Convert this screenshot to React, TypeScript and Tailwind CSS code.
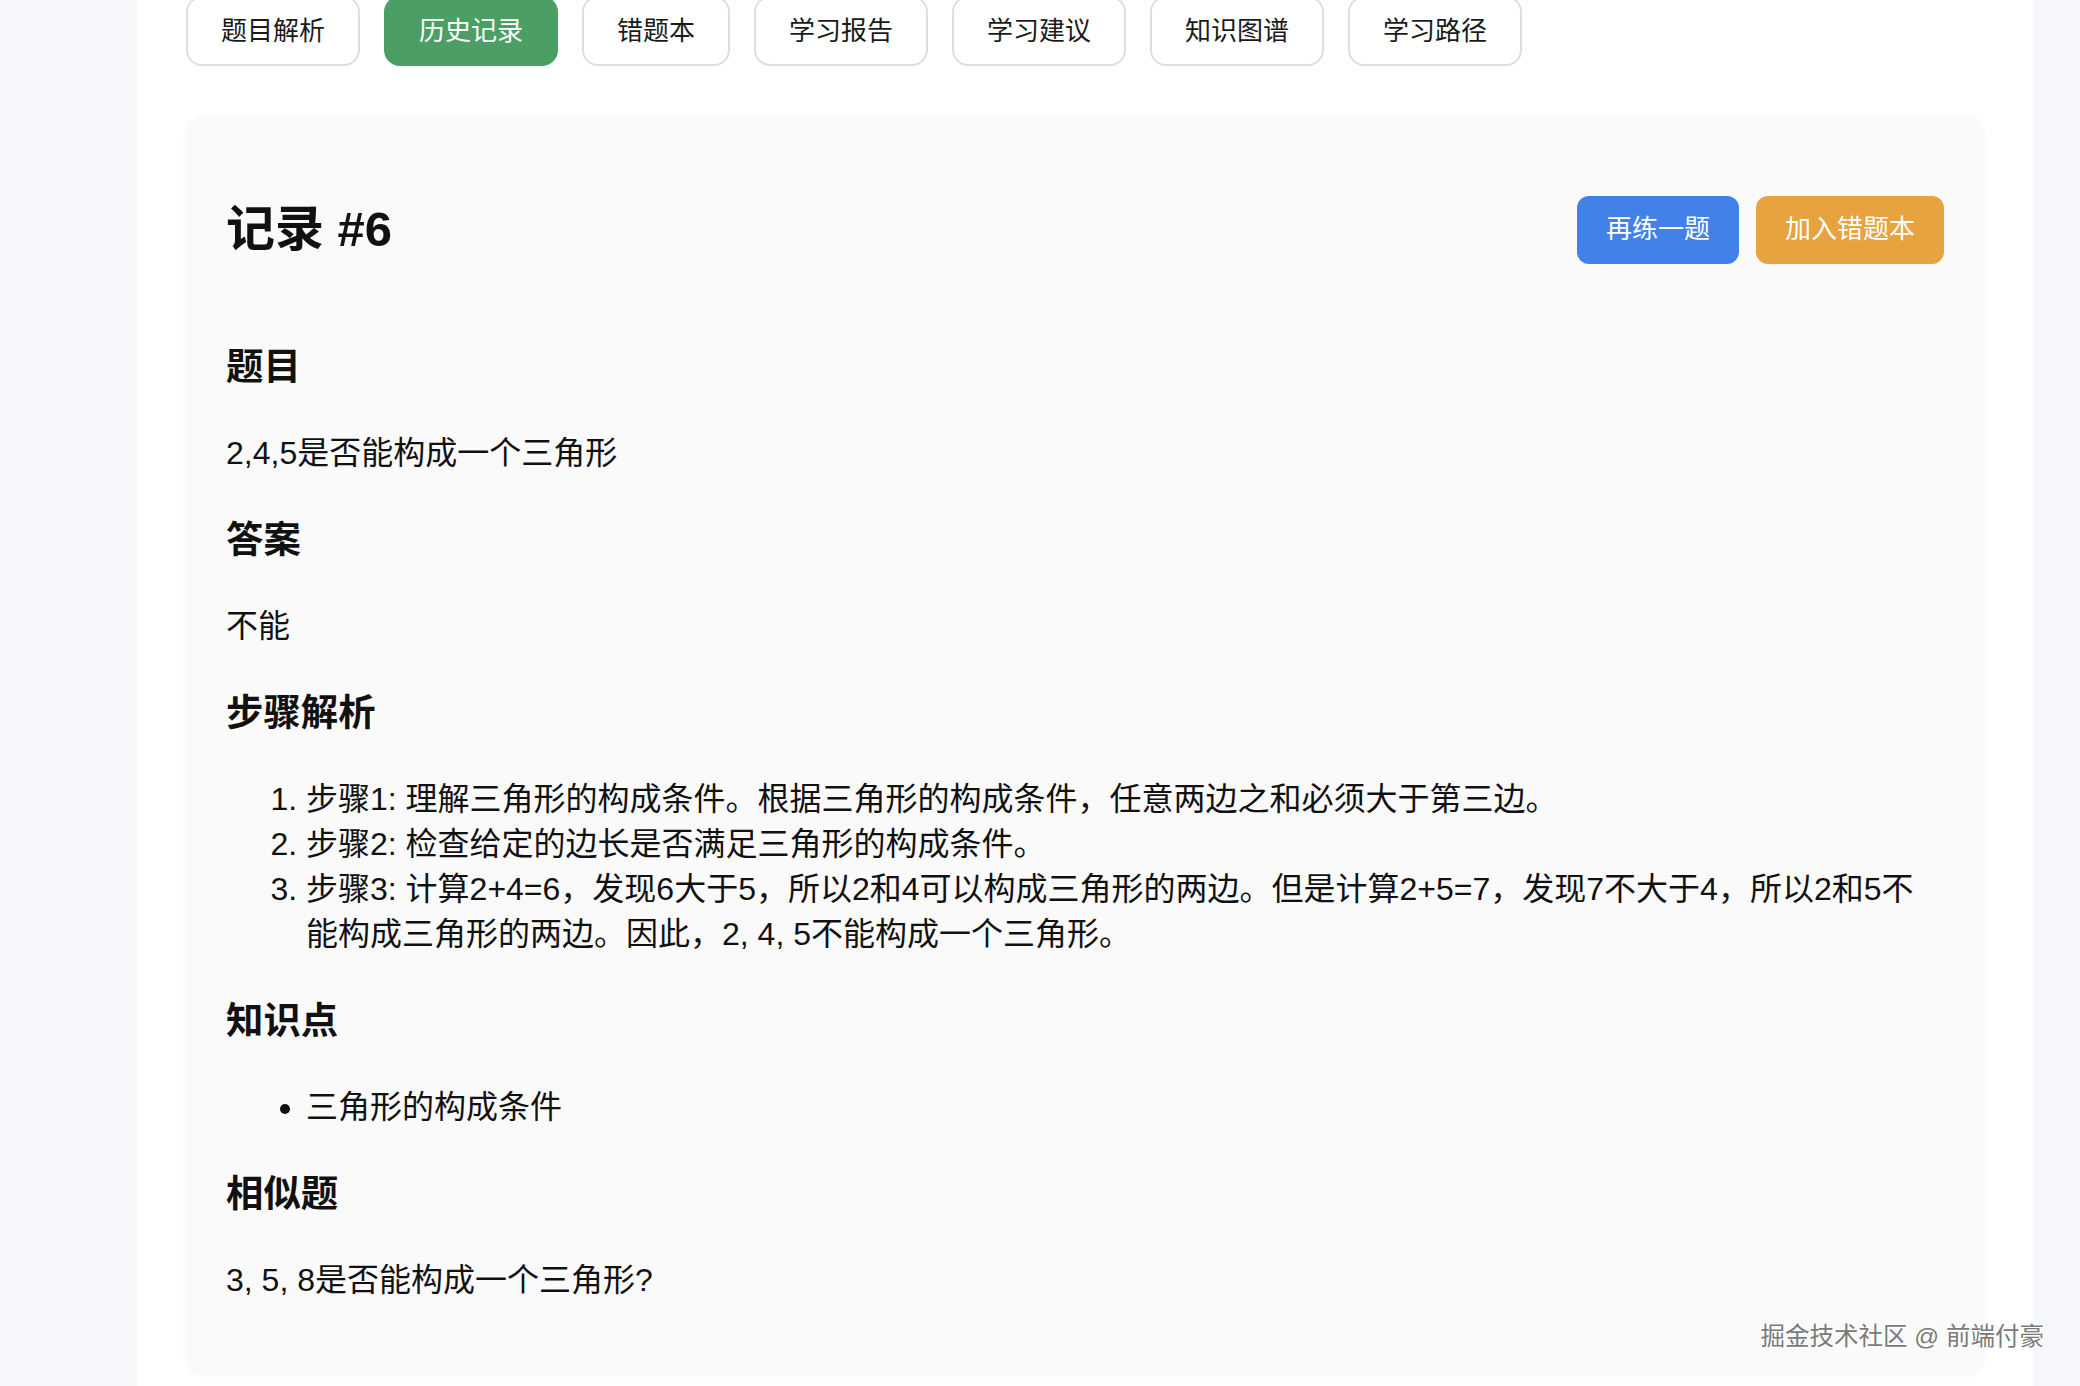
const tabs = ["题目解析", "历史记录", "错题本", "学习报告", "学习建议", "知识图谱", "学习路径"];

const steps = [
  "步骤1: 理解三角形的构成条件。根据三角形的构成条件，任意两边之和必须大于第三边。",
  "步骤2: 检查给定的边长是否满足三角形的构成条件。",
  "步骤3: 计算2+4=6，发现6大于5，所以2和4可以构成三角形的两边。但是计算2+5=7，发现7不大于4，所以2和5不能构成三角形的两边。因此，2, 4, 5不能构成一个三角形。",
];

function Section({ title, children }: { title: string; children: React.ReactNode }) {
  return (
    <>
      <h3 className="my-[37px] text-[37.4px] font-bold leading-[54px]">{title}</h3>
      {children}
    </>
  );
}

export default function App() {
  return (
    <div
      className="relative flex h-[1386px] overflow-hidden bg-[#f5f7fa] text-[#111]"
      style={{ fontFamily: '"Liberation Sans", "Noto Sans CJK SC", sans-serif' }}
    >
      <main className="ml-[137px] w-[1896px] bg-white px-[49px]">
        {/* tab bar */}
        <div className="-mt-[4px] flex gap-[24px]">
          {tabs.map((t, i) => (
            <button
              key={t}
              className={
                i === 1
                  ? "h-[70px] rounded-[16px] border-2 border-[#4c9f64] bg-[#4c9f64] px-[33px] text-[26px] text-white"
                  : "h-[70px] rounded-[16px] border-2 border-[#dedede] bg-white px-[33px] text-[26px] text-[#1a1a1a]"
              }
            >
              {t}
            </button>
          ))}
        </div>

        {/* record card */}
        <div className="mt-[51px] rounded-[16px] bg-[#fafafa] px-[40px] pb-[40px] pt-[1px] shadow-[0_0_6px_rgba(0,0,0,0.03)]">
          <div className="mt-[38px] flex items-center justify-between">
            <h2 className="my-[40px] text-[49px] font-bold leading-[67px]">记录 #6</h2>
            <div className="flex gap-[17px]">
              <button className="h-[68px] rounded-[12px] bg-[#4181e8] px-[29px] text-[26px] text-white">
                再练一题
              </button>
              <button className="h-[68px] rounded-[12px] bg-[#e6a33f] px-[29px] text-[26px] text-white">
                加入错题本
              </button>
            </div>
          </div>

          <div className="text-[32px] leading-[45px]">
            <Section title="题目">
              <p className="my-[32px]">2,4,5是否能构成一个三角形</p>
            </Section>
            <Section title="答案">
              <p className="my-[32px]">不能</p>
            </Section>
            <Section title="步骤解析">
              <ol className="my-[32px] list-decimal pl-[80px]">
                {steps.map((s) => (
                  <li key={s}>{s}</li>
                ))}
              </ol>
            </Section>
            <Section title="知识点">
              <ul className="my-[32px] list-disc pl-[80px]">
                <li>三角形的构成条件</li>
              </ul>
            </Section>
            <Section title="相似题">
              <p className="my-[32px]">3, 5, 8是否能构成一个三角形?</p>
            </Section>
          </div>
        </div>
      </main>

      <div className="absolute bottom-[30px] right-[36px] text-[24.5px] text-[#7a7a7a] [text-shadow:1px_1px_0_#fff,-1px_-1px_0_#fff]">
        掘金技术社区 @ 前端付豪
      </div>
    </div>
  );
}
